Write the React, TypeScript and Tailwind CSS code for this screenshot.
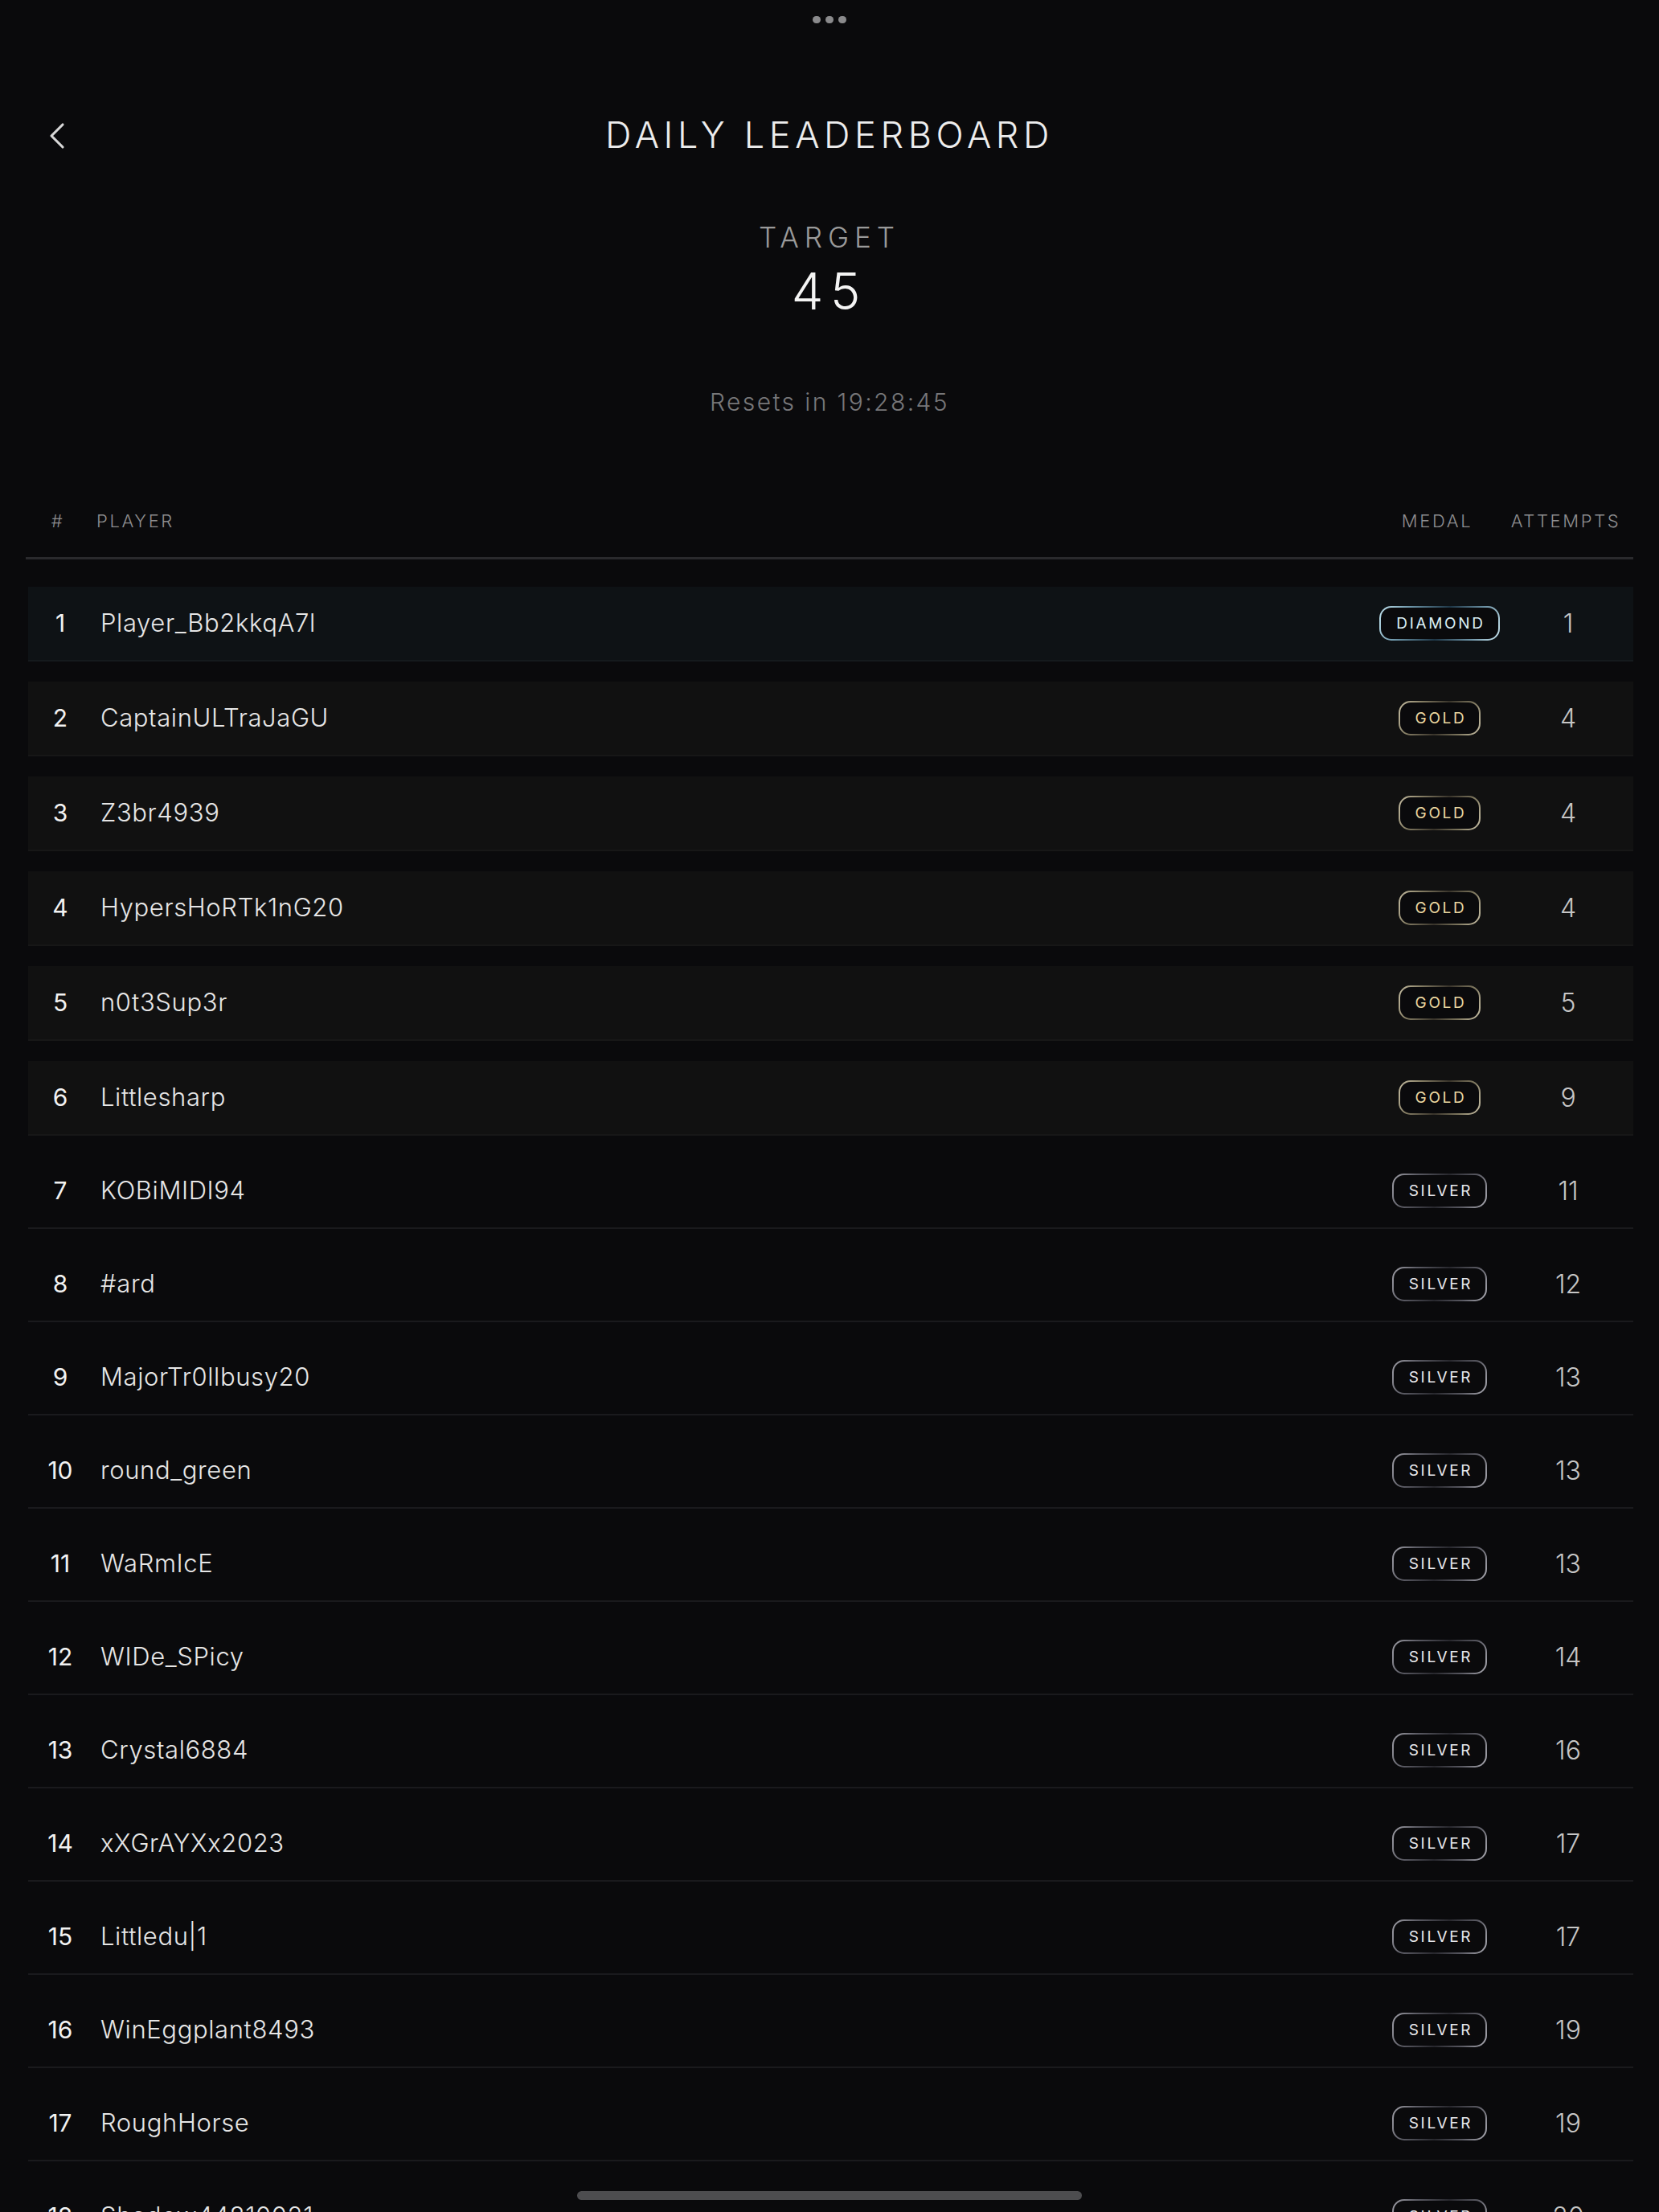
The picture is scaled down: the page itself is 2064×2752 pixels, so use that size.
import { ChevronLeft } from "lucide-react";

type Medal = "DIAMOND" | "GOLD" | "SILVER";

type Entry = {
  name: string;
  medal: Medal;
  attempts: number;
};

const entries: Entry[] = [
  { name: "Player_Bb2kkqA7l", medal: "DIAMOND", attempts: 1 },
  { name: "CaptainULTraJaGU", medal: "GOLD", attempts: 4 },
  { name: "Z3br4939", medal: "GOLD", attempts: 4 },
  { name: "HypersHoRTk1nG20", medal: "GOLD", attempts: 4 },
  { name: "n0t3Sup3r", medal: "GOLD", attempts: 5 },
  { name: "Littlesharp", medal: "GOLD", attempts: 9 },
  { name: "KOBiMIDI94", medal: "SILVER", attempts: 11 },
  { name: "#ard", medal: "SILVER", attempts: 12 },
  { name: "MajorTr0llbusy20", medal: "SILVER", attempts: 13 },
  { name: "round_green", medal: "SILVER", attempts: 13 },
  { name: "WaRmIcE", medal: "SILVER", attempts: 13 },
  { name: "WIDe_SPicy", medal: "SILVER", attempts: 14 },
  { name: "Crystal6884", medal: "SILVER", attempts: 16 },
  { name: "xXGrAYXx2023", medal: "SILVER", attempts: 17 },
  { name: "Littledu|1", medal: "SILVER", attempts: 17 },
  { name: "WinEggplant8493", medal: "SILVER", attempts: 19 },
  { name: "RoughHorse", medal: "SILVER", attempts: 19 },
  { name: "Shadow44810021", medal: "SILVER", attempts: 20 },
];

// gradient ring + label colour per medal
const medalStyles: Record<Medal, { ring: string; text: string }> = {
  DIAMOND: {
    ring: "bg-[linear-gradient(115deg,#c3e4ef_0%,#6f98ab_22%,#1e3646_52%,#6d93a6_78%,#cbe7f1_100%)]",
    text: "text-[#dcf0f6]",
  },
  GOLD: {
    ring: "bg-[linear-gradient(115deg,#c9c1a6_0%,#8a8268_22%,#38332a_52%,#7f785f_78%,#cfc7ad_100%)]",
    text: "text-[#ead7a0]",
  },
  SILVER: {
    ring: "bg-[linear-gradient(115deg,#a4a4ac_0%,#5d5d66_22%,#27272d_52%,#5a5a63_78%,#b0b0b8_100%)]",
    text: "text-[#e8e8ec]",
  },
};

function MedalBadge({ medal }: { medal: Medal }) {
  const style = medalStyles[medal];
  return (
    <span className={`inline-flex rounded-[15px] p-[2px] ${style.ring}`}>
      <span
        className={`flex h-[39px] items-center rounded-[13px] bg-[#0a0a0c] pl-[19px] pr-[16px] text-[19px] leading-none tracking-[0.14em] ${style.text}`}
      >
        {medal}
      </span>
    </span>
  );
}

function Row({ entry, rank }: { entry: Entry; rank: number }) {
  const highlighted = rank <= 6;
  const bg =
    rank === 1
      ? "bg-[#0e1215] border-[#151a1d]"
      : highlighted
        ? "bg-[#111111] border-[#171717]"
        : "border-[#1a1a1d]";
  const spacing = rank === 1 ? "mt-[34px]" : highlighted ? "mt-[25px]" : "mt-[23px]";

  return (
    <div className={`ml-[3px] flex h-[93px] items-center border-b-2 pr-[4px] ${bg} ${spacing}`}>
      <div className="w-[80px] text-center text-[30px] font-normal text-[#f2f2f2]">{rank}</div>
      <div className="flex-1 pl-[10px] text-[31px] font-light tracking-[0.02em] text-[#e6e6e6]">
        {entry.name}
      </div>
      <div className="flex w-[166px] justify-center">
        <MedalBadge medal={entry.medal} />
      </div>
      <div className="w-[154px] text-center text-[32px] font-light text-[#c6c6c6]">{entry.attempts}</div>
    </div>
  );
}

export default function App() {
  return (
    <div className="relative h-[2752px] w-[2064px] overflow-hidden bg-[#0a0a0c] font-['Inter',sans-serif]">
      {/* window grabber */}
      <div className="flex h-[48px] items-center justify-center gap-[6px]">
        <span className="h-[9px] w-[10px] rounded-full bg-[#8a8a8c]" />
        <span className="h-[9px] w-[10px] rounded-full bg-[#8a8a8c]" />
        <span className="h-[9px] w-[10px] rounded-full bg-[#8a8a8c]" />
      </div>

      <div className="relative mt-[93px] flex h-[54px] items-center justify-center">
        <button className="absolute left-[43px] top-0 text-[#d8d8d8]">
          <ChevronLeft size={56} strokeWidth={1.35} />
        </button>
        <h1 className="text-[45px] font-light leading-[54px] tracking-[0.125em] text-[#ededed]">
          DAILY LEADERBOARD
        </h1>
      </div>

      <div className="mt-[80px] flex flex-col items-center">
        <div className="text-[35px] font-light leading-[40px] tracking-[0.2em] text-[#9a9a9a]">TARGET</div>
        <div className="mt-[12px] text-[63px] font-light leading-[70px] tracking-[0.14em] text-[#f4f4f4]">
          45
        </div>
        <div className="mt-[83px] text-[30px] font-light leading-[40px] tracking-[0.08em] text-[#777779]">
          Resets in 19:28:45
        </div>
      </div>

      <div className="mx-[32px] mt-[113px]">
        <div className="flex h-[63px] items-start border-b-[3px] border-[#2a2a2d] pr-[7px] text-[22px] font-light leading-[30px] tracking-[0.12em] text-[#8e8e90]">
          <div className="w-[80px] text-center">#</div>
          <div className="flex-1 pl-[8px]">PLAYER</div>
          <div className="w-[166px] text-center">MEDAL</div>
          <div className="w-[154px] text-center">ATTEMPTS</div>
        </div>

        {entries.map((entry, i) => (
          <Row key={entry.name} entry={entry} rank={i + 1} />
        ))}
      </div>

      {/* home indicator */}
      <div className="absolute bottom-[15px] left-[718px] h-[11px] w-[628px] rounded-full bg-[#4d4d4f]" />
    </div>
  );
}
